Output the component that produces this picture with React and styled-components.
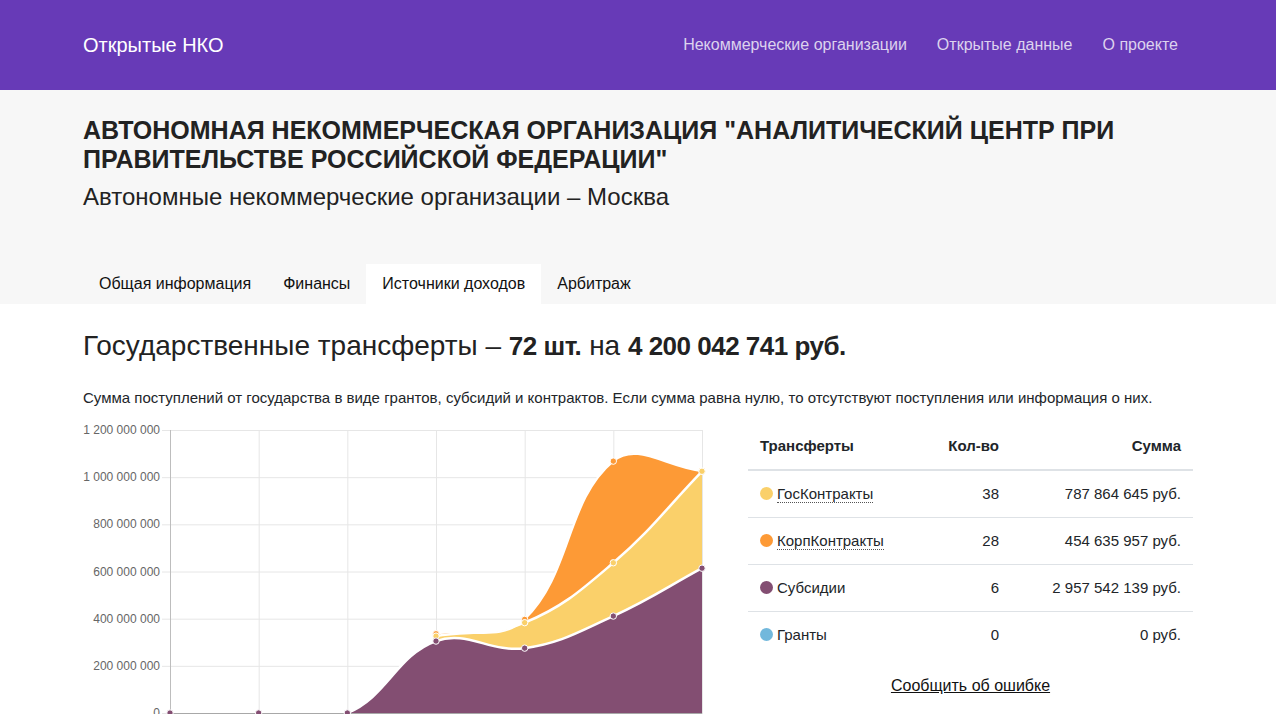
import React from 'react';
import styled, { createGlobalStyle } from 'styled-components';

const GlobalStyle = createGlobalStyle`
  body {
    margin: 0;
    font-family: "Liberation Sans", Arial, sans-serif;
    color: #212529;
    background: #fff;
  }
`;

const COLORS = {
  gos: '#fad06a',
  korp: '#fd9a36',
  subs: '#834e72',
  grants: '#72b8dc',
};

// values in millions, stacked from bottom: subsidies, gos, korp
const YEARS = ['2012', '2013', '2014', '2015', '2016', '2017', '2018'];
const SUBS = [0, 0, 0, 305, 275, 411, 614];
const GOS = [null, null, null, 21, 108, 226, 411];
const KORP = [null, null, null, 10, 14, 431, 0];

const CHART_W = 635;
const CHART_H = 330;
const LEFT = 87;
const RIGHT = 619;
const TOP = 9;
const ZERO = 292;
const MAX = 1200;

const xAt = (i) => LEFT + (i * (RIGHT - LEFT)) / (YEARS.length - 1);
const yAt = (v) => ZERO - (v / MAX) * (ZERO - TOP);

const stack = (...sets) =>
  sets[0].map((_, i) => {
    if (sets.some((s) => s[i] === null)) return null;
    return sets.reduce((sum, s) => sum + s[i], 0);
  });

const LINE_SUBS = stack(SUBS);
const LINE_GOS = stack(SUBS, GOS);
const LINE_KORP = stack(SUBS, GOS, KORP);

const clampY = (y) => Math.min(ZERO, Math.max(TOP, y));

// chart.js style spline with tension .4, control points kept inside the area
function buildPoints(values) {
  const pts = values
    .map((v, i) => (v === null ? null : { x: xAt(i), y: yAt(v), i }))
    .filter(Boolean);
  const t = 0.4;
  return pts.map((p, k) => {
    const prev = pts[k - 1] || p;
    const next = pts[k + 1] || p;
    const d01 = Math.hypot(p.x - prev.x, p.y - prev.y);
    const d12 = Math.hypot(next.x - p.x, next.y - p.y);
    let s01 = d01 / (d01 + d12);
    let s12 = d12 / (d01 + d12);
    if (isNaN(s01)) s01 = 0;
    if (isNaN(s12)) s12 = 0;
    const fa = t * s01;
    const fb = t * s12;
    return {
      ...p,
      cpPrev: { x: p.x - fa * (next.x - prev.x), y: clampY(p.y - fa * (next.y - prev.y)) },
      cpNext: { x: p.x + fb * (next.x - prev.x), y: clampY(p.y + fb * (next.y - prev.y)) },
    };
  });
}

function curve(pts) {
  let d = `M${pts[0].x},${pts[0].y}`;
  for (let k = 1; k < pts.length; k++) {
    const a = pts[k - 1];
    const b = pts[k];
    d += ` C${a.cpNext.x},${a.cpNext.y} ${b.cpPrev.x},${b.cpPrev.y} ${b.x},${b.y}`;
  }
  return d;
}

function reverseCurve(pts) {
  const r = pts.slice().reverse();
  let d = ` L${r[0].x},${r[0].y}`;
  for (let k = 1; k < r.length; k++) {
    const a = r[k - 1];
    const b = r[k];
    d += ` C${a.cpPrev.x},${a.cpPrev.y} ${b.cpNext.x},${b.cpNext.y} ${b.x},${b.y}`;
  }
  return d;
}

function areaBetween(top, bottom) {
  const from = top[0].i;
  const to = top[top.length - 1].i;
  const lower = bottom.filter((p) => p.i >= from && p.i <= to);
  return curve(top) + reverseCurve(lower) + ' Z';
}

const formatNum = (n) => String(n).replace(/\B(?=(\d{3})+(?!\d))/g, ' ');

const AreaChart = () => {
  const subs = buildPoints(LINE_SUBS);
  const gos = buildPoints(LINE_GOS);
  const korp = buildPoints(LINE_KORP);
  const base = subs.map((p) => ({ ...p, y: ZERO, cpPrev: { x: p.cpPrev.x, y: ZERO }, cpNext: { x: p.cpNext.x, y: ZERO } }));
  const ticks = [0, 200, 400, 600, 800, 1000, 1200];

  return (
    <svg width={CHART_W} height={CHART_H} viewBox={`0 0 ${CHART_W} ${CHART_H}`}>
      {ticks.map((v) => (
        <g key={v}>
          <line x1={LEFT - 8} x2={RIGHT} y1={yAt(v) + 0.5} y2={yAt(v) + 0.5} stroke="#e6e6e6" strokeWidth="1" />
          <text x={LEFT - 10} y={yAt(v) + 4} textAnchor="end" fontSize="12" fill="#666" fontFamily="Liberation Sans, Arial, sans-serif">
            {v === 0 ? '0' : formatNum(v * 1000000)}
          </text>
        </g>
      ))}
      {YEARS.map((y, i) => (
        <g key={y}>
          <line x1={xAt(i) + 0.5} x2={xAt(i) + 0.5} y1={TOP} y2={ZERO + 8} stroke={i === 0 ? '#bdbdbd' : '#e6e6e6'} strokeWidth="1" />
          <text x={xAt(i)} y={ZERO + 24} textAnchor="middle" fontSize="12" fill="#666" fontFamily="Liberation Sans, Arial, sans-serif">
            {y}
          </text>
        </g>
      ))}
      <path d={areaBetween(subs, base)} fill={COLORS.subs} />
      <path d={areaBetween(gos, subs)} fill={COLORS.gos} />
      <path d={areaBetween(korp, gos)} fill={COLORS.korp} />
      <path d={curve(korp)} fill="none" stroke="#fff" strokeWidth="2" />
      <path d={curve(gos)} fill="none" stroke="#fff" strokeWidth="2.5" />
      <path d={curve(subs.slice(2))} fill="none" stroke="#fff" strokeWidth="2.5" />
      <line x1={LEFT} x2={RIGHT} y1={ZERO + 0.5} y2={ZERO + 0.5} stroke="#a8a8a8" strokeWidth="1" />
      {[['k', korp, COLORS.korp], ['g', gos, COLORS.gos], ['s', subs, COLORS.subs]].map(([key, pts, c]) =>
        pts.map((p) => <circle key={key + p.i} cx={p.x} cy={p.y} r="3.2" fill={c} stroke="#fff" strokeWidth="1" />)
      )}
    </svg>
  );
};

const ROWS = [
  { name: 'ГосКонтракты', color: COLORS.gos, count: 38, sum: '787 864 645 руб.', link: true },
  { name: 'КорпКонтракты', color: COLORS.korp, count: 28, sum: '454 635 957 руб.', link: true },
  { name: 'Субсидии', color: COLORS.subs, count: 6, sum: '2 957 542 139 руб.' },
  { name: 'Гранты', color: COLORS.grants, count: 0, sum: '0 руб.' },
];

const App = () => (
  <>
    <GlobalStyle />
    <Navbar>
      <Container>
        <NavInner>
          <Brand href="#">Открытые НКО</Brand>
          <NavLinks>
            <NavLink href="#">Некоммерческие организации</NavLink>
            <NavLink href="#">Открытые данные</NavLink>
            <NavLink href="#">О проекте</NavLink>
          </NavLinks>
        </NavInner>
      </Container>
    </Navbar>

    <Jumbo>
      <Container>
        <OrgTitle>Автономная некоммерческая организация "Аналитический центр при правительстве российской федерации"</OrgTitle>
        <OrgSub>Автономные некоммерческие организации – Москва</OrgSub>
        <Tabs>
          <Tab>Общая информация</Tab>
          <Tab>Финансы</Tab>
          <Tab active>Источники доходов</Tab>
          <Tab>Арбитраж</Tab>
        </Tabs>
      </Container>
    </Jumbo>

    <Container>
      <SectionTitle>
        Государственные трансферты – <b>72 шт.</b> на <b>4 200 042 741 руб.</b>
      </SectionTitle>
      <Lead>
        Сумма поступлений от государства в виде грантов, субсидий и контрактов. Если сумма равна нулю, то отсутствуют поступления или информация о них.
      </Lead>
      <Row>
        <ChartCol>
          <AreaChart />
        </ChartCol>
        <TableCol>
          <Table>
            <thead>
              <tr>
                <Th>Трансферты</Th>
                <Th align="right">Кол-во</Th>
                <Th align="right" width="158">Сумма</Th>
              </tr>
            </thead>
            <tbody>
              {ROWS.map((r) => (
                <tr key={r.name}>
                  <Td>
                    <Dot color={r.color} />
                    {r.link ? <DottedLink href="#">{r.name}</DottedLink> : r.name}
                  </Td>
                  <Td align="right">{r.count}</Td>
                  <Td align="right">{r.sum}</Td>
                </tr>
              ))}
            </tbody>
          </Table>
          <Report href="#">Сообщить об ошибке</Report>
        </TableCol>
      </Row>
    </Container>
  </>
);

export default App;

// Styled components
const Container = styled.div`
  width: 1110px;
  margin: 0 auto;
`;

const Navbar = styled.nav`
  background: #673ab7;
  height: 90px;
`;

const NavInner = styled.div`
  height: 90px;
  display: flex;
  align-items: center;
  justify-content: space-between;
`;

const Brand = styled.a`
  color: #fff;
  font-size: 20px;
  text-decoration: none;
`;

const NavLinks = styled.div`
  display: flex;
`;

const NavLink = styled.a`
  color: rgba(255, 255, 255, 0.78);
  font-size: 16px;
  padding: 0 15px;
  text-decoration: none;
`;

const Jumbo = styled.div`
  background: #f7f7f7;
  padding-top: 26px;
`;

const OrgTitle = styled.h1`
  margin: 0;
  font-size: 25px;
  line-height: 29px;
  font-weight: bold;
  text-transform: uppercase;
  color: #222;
`;

const OrgSub = styled.h2`
  margin: 9px 0 0;
  font-size: 24px;
  line-height: 28px;
  font-weight: normal;
  color: #222;
`;

const Tabs = styled.div`
  display: flex;
  margin-top: 53px;
`;

const Tab = styled.div`
  height: 40px;
  line-height: 40px;
  padding: 0 16px;
  font-size: 16px;
  color: #111;
  background: ${(p) => (p.active ? '#fff' : 'transparent')};
`;

const SectionTitle = styled.h3`
  margin: 25px 0 0;
  font-size: 28px;
  line-height: 34px;
  font-weight: normal;
  color: #222;

  b {
    font-weight: bold;
    font-size: 26px;
    letter-spacing: -0.5px;
  }
`;

const Lead = styled.p`
  margin: 24px 0 0;
  font-size: 15px;
  line-height: 22px;
`;

const Row = styled.div`
  display: flex;
  margin-top: 12px;
`;

const ChartCol = styled.div`
  width: 635px;
  flex: none;
`;

const TableCol = styled.div`
  margin-left: 30px;
  flex: 1;
  display: flex;
  flex-direction: column;
  align-items: center;
`;

const Table = styled.table`
  width: 100%;
  border-collapse: collapse;
  font-size: 15px;
  margin-top: 2px;
`;

const Th = styled.th`
  text-align: ${(p) => p.align || 'left'};
  width: ${(p) => (p.width ? `${p.width}px` : 'auto')};
  padding: 12px;
  line-height: 22px;
  font-weight: bold;
  white-space: nowrap;
  border-bottom: 2px solid #dee2e6;
`;

const Td = styled.td`
  text-align: ${(p) => p.align || 'left'};
  padding: 12px;
  line-height: 22px;
  white-space: nowrap;
  border-top: 1px solid #dee2e6;
`;

const Dot = styled.span`
  display: inline-block;
  width: 13px;
  height: 13px;
  border-radius: 50%;
  background: ${(p) => p.color};
  margin-right: 4px;
  vertical-align: -1px;
`;

const DottedLink = styled.a`
  color: #212529;
  text-decoration: none;
  border-bottom: 1px dotted #555;
`;

const Report = styled.a`
  margin-top: 19px;
  color: #111;
  font-size: 16px;
  text-decoration: underline;
`;
